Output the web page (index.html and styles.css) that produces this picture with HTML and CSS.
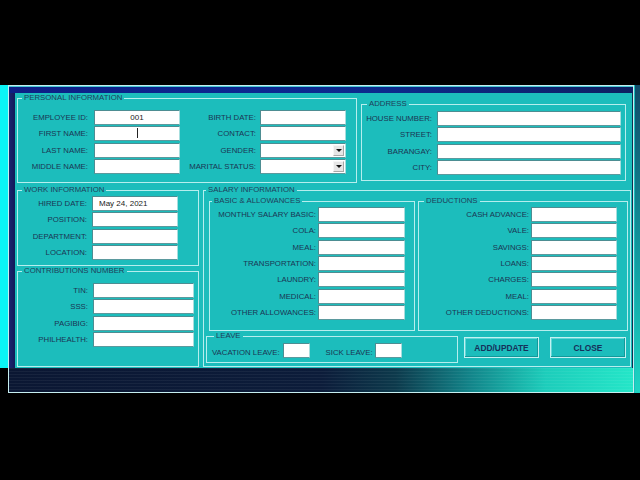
FILE: index.html
```html
<!DOCTYPE html>
<html>
<head>
<meta charset="utf-8">
<title>Employee Form</title>
<link rel="stylesheet" href="styles.css">
</head>
<body>
<div class="stage">
  <div class="strip"></div>
  <div class="window">
    <div class="topbar"></div>
    <div class="middle">
      <div class="sidebar"></div>
      <div class="panel">
        <div class="row1">
          <fieldset class="grp personal">
            <legend>PERSONAL INFORMATION</legend>
            <div class="form personal-grid">
              <label>EMPLOYEE ID:</label><span class="field center">001</span>
              <label class="l2">BIRTH DATE:</label><span class="field"></span>
              <label>FIRST NAME:</label><span class="field center"><i class="caret"></i></span>
              <label class="l2">CONTACT:</label><span class="field"></span>
              <label>LAST NAME:</label><span class="field"></span>
              <label class="l2">GENDER:</label><span class="field select"><b class="drop"></b></span>
              <label>MIDDLE NAME:</label><span class="field"></span>
              <label class="l2">MARITAL STATUS:</label><span class="field select"><b class="drop"></b></span>
            </div>
          </fieldset>
          <fieldset class="grp address">
            <legend>ADDRESS</legend>
            <div class="form address-grid">
              <label>HOUSE NUMBER:</label><span class="field"></span>
              <label>STREET:</label><span class="field"></span>
              <label>BARANGAY:</label><span class="field"></span>
              <label>CITY:</label><span class="field"></span>
            </div>
          </fieldset>
        </div>
        <div class="row2">
          <div class="leftcol">
            <fieldset class="grp work">
              <legend>WORK INFORMATION</legend>
              <div class="form work-grid">
                <label>HIRED DATE:</label><span class="field date">May 24, 2021</span>
                <label>POSITION:</label><span class="field"></span>
                <label>DEPARTMENT:</label><span class="field"></span>
                <label>LOCATION:</label><span class="field"></span>
              </div>
            </fieldset>
            <fieldset class="grp contrib">
              <legend>CONTRIBUTIONS NUMBER</legend>
              <div class="form contrib-grid">
                <label>TIN:</label><span class="field"></span>
                <label>SSS:</label><span class="field"></span>
                <label>PAGIBIG:</label><span class="field"></span>
                <label>PHILHEALTH:</label><span class="field"></span>
              </div>
            </fieldset>
          </div>
          <fieldset class="grp salary">
            <legend>SALARY INFORMATION</legend>
            <div class="sal-top">
              <fieldset class="grp basic">
                <legend>BASIC &amp; ALLOWANCES</legend>
                <div class="form basic-grid">
                  <label>MONTHLY SALARY BASIC:</label><span class="field"></span>
                  <label>COLA:</label><span class="field"></span>
                  <label>MEAL:</label><span class="field"></span>
                  <label>TRANSPORTATION:</label><span class="field"></span>
                  <label>LAUNDRY:</label><span class="field"></span>
                  <label>MEDICAL:</label><span class="field"></span>
                  <label>OTHER ALLOWANCES:</label><span class="field"></span>
                </div>
              </fieldset>
              <fieldset class="grp deductions">
                <legend>DEDUCTIONS</legend>
                <div class="form deduct-grid">
                  <label>CASH ADVANCE:</label><span class="field"></span>
                  <label>VALE:</label><span class="field"></span>
                  <label>SAVINGS:</label><span class="field"></span>
                  <label>LOANS:</label><span class="field"></span>
                  <label>CHARGES:</label><span class="field"></span>
                  <label>MEAL:</label><span class="field"></span>
                  <label>OTHER DEDUCTIONS:</label><span class="field"></span>
                </div>
              </fieldset>
            </div>
            <div class="sal-bottom">
              <fieldset class="grp leave">
                <legend>LEAVE</legend>
                <div class="leave-row">
                  <label>VACATION LEAVE:</label><span class="field small"></span>
                  <label class="sick">SICK LEAVE:</label><span class="field small tight"></span>
                </div>
              </fieldset>
              <button class="btn add">ADD/UPDATE</button>
              <button class="btn close">CLOSE</button>
            </div>
          </fieldset>
        </div>
      </div>
      <div class="rightbar"></div>
    </div>
    <div class="bottombar"></div>
  </div>
  <div class="rstrip"></div>
</div>
</body>
</html>
```

FILE: styles.css
```css
* { box-sizing: border-box; }

body {
  margin: 0;
  width: 640px;
  height: 480px;
  overflow: hidden;
  background: #000;
  font-family: "Liberation Sans", Arial, sans-serif;
  font-size: 7.8px;
  color: #1b3553;
}

.stage {
  margin-top: 85px;
  display: flex;
  align-items: flex-start;
}

.strip {
  width: 8px;
  height: 283px;
  background: #0af4f6;
}

.window {
  width: 626px;
  height: 308px;
  border: 1px solid #c6eef0;
  background: #0e1a52;
}

.topbar {
  height: 7px;
  border-top: 1px solid #46c8d4;
  background: linear-gradient(90deg, #0d1f86 0%, #0b2790 40%, #0c2a8c 60%, #0d1f60 100%);
}

.middle {
  display: flex;
  height: 275px;
}

.sidebar {
  width: 6px;
  background: linear-gradient(90deg, #1a2470, #121a58);
}

.panel {
  width: 617px;
  background: #1cbdbc;
}

.rightbar {
  flex: 1;
  background: #0e3050;
}

.bottombar {
  height: 24px;
  background:
    repeating-linear-gradient(180deg, rgba(255,255,255,0.05) 0 1px, rgba(0,0,0,0) 1px 3px),
    linear-gradient(90deg, #0b1733 0%, #0c1c3a 50%, #0d3a4c 62%, #12858a 74%, #1dcdbb 86%, #24e6c8 100%);
}

.rstrip {
  width: 6px;
  height: 308px;
  background: linear-gradient(180deg, #0f4a68 0%, #12a0a4 60%, #1ed6c4 100%);
  border-left: 1px solid #1cbdbc;
}

/* group boxes */
.grp {
  margin: 0;
  padding: 0;
  min-width: 0;
  border: 1px solid #b6eeee;
}

.grp legend {
  margin-left: 4px;
  padding: 0 2px;
  line-height: 10px;
  font-size: 7.8px;
  color: #1f3d5a;
}

.row1 {
  display: flex;
  align-items: flex-start;
  height: 92px;
  padding-left: 2px;
}

.personal {
  width: 340px;
  height: 90px;
  padding-top: 7px;
}

.address {
  width: 265px;
  height: 82px;
  margin: 6px 0 0 4px;
  padding-top: 2px;
}

.address legend { margin-left: 5px; }

.row2 {
  display: flex;
  align-items: flex-start;
  padding-left: 2px;
}

.leftcol {
  width: 182px;
  display: flex;
  flex-direction: column;
}

.work {
  height: 81px;
  padding-top: 1px;
}

.contrib {
  height: 101px;
  padding-top: 7px;
}

.salary {
  width: 428px;
  height: 182px;
  margin-left: 4px;
}

.salary legend { margin-left: 2px; }

/* forms */
.form {
  display: grid;
  grid-auto-rows: 15px;
  row-gap: 1.33px;
}

.form label {
  line-height: 15px;
  text-align: right;
  white-space: nowrap;
  padding-right: 6px;
}

.field {
  position: relative;
  display: block;
  height: 15px;
  background: #fff;
  border: 1px solid;
  border-color: #4d8d92 #a6dede #5b9a9e #4d8d92;
  color: #1a1a1a;
  font-size: 8px;
  line-height: 13px;
}

.field.center { text-align: center; }
.field.date { padding-left: 6px; }

.caret {
  display: inline-block;
  width: 1px;
  height: 10px;
  margin-top: 1px;
  vertical-align: top;
  background: #222;
}

.drop {
  position: absolute;
  right: 1px;
  top: 1px;
  width: 11px;
  height: 11px;
  background: #e6e6e6;
  border: 1px solid #f6f6f6;
  border-right-color: #a8a8a8;
  border-bottom-color: #a8a8a8;
}

.drop::after {
  content: "";
  position: absolute;
  left: 2px;
  top: 3px;
  border-left: 3px solid transparent;
  border-right: 3px solid transparent;
  border-top: 3px solid #111;
}

.personal-grid { grid-template-columns: 76px 86px 80px 86px; }
.personal-grid .l2 { padding-right: 4px; }

.address-grid { grid-template-columns: 75px 184px; }
.address-grid label { padding-right: 5px; }

.work-grid { grid-template-columns: 74px 86px; }
.work-grid label { padding-right: 5px; }

.contrib-grid { grid-template-columns: 75px 101px; }
.contrib-grid label { padding-right: 5px; }

.sal-top {
  display: flex;
  gap: 3px;
  margin: 1px 0 0 5px;
}

.basic {
  width: 206px;
  height: 135px;
  padding-top: 1px;
}

.deductions {
  width: 210px;
  height: 135px;
  padding-top: 1px;
}

.deductions legend { margin-left: 5px; }

.basic-grid { grid-template-columns: 108px 87px; }
.deduct-grid { grid-template-columns: 112px 86px; }
.basic-grid label, .deduct-grid label { padding-right: 2px; }

.sal-bottom {
  display: flex;
  align-items: flex-start;
  margin-left: 2px;
}

.leave {
  width: 252px;
  height: 32px;
  padding: 2px 0 0 5px;
}

.leave-row {
  display: flex;
  align-items: center;
  height: 15px;
}

.leave-row label {
  line-height: 15px;
  padding-top: 3px;
  margin-right: 3px;
  white-space: nowrap;
}

.leave-row .sick {
  margin-left: 16px;
  margin-right: 2px;
}

.field.small { width: 27px; }

.btn {
  margin: 6px 0 0 6px;
  width: 75px;
  height: 21px;
  padding: 0;
  background: #1cbdbc;
  border: 1px solid #c2f2f2;
  box-shadow: inset -1px -1px 0 #13989a, inset 1px 1px 0 #5fd6d6;
  font-family: "Liberation Sans", Arial, sans-serif;
  font-size: 8.4px;
  font-weight: bold;
  color: #16305a;
}

.btn.close {
  width: 76px;
  margin-left: 11px;
}
```
